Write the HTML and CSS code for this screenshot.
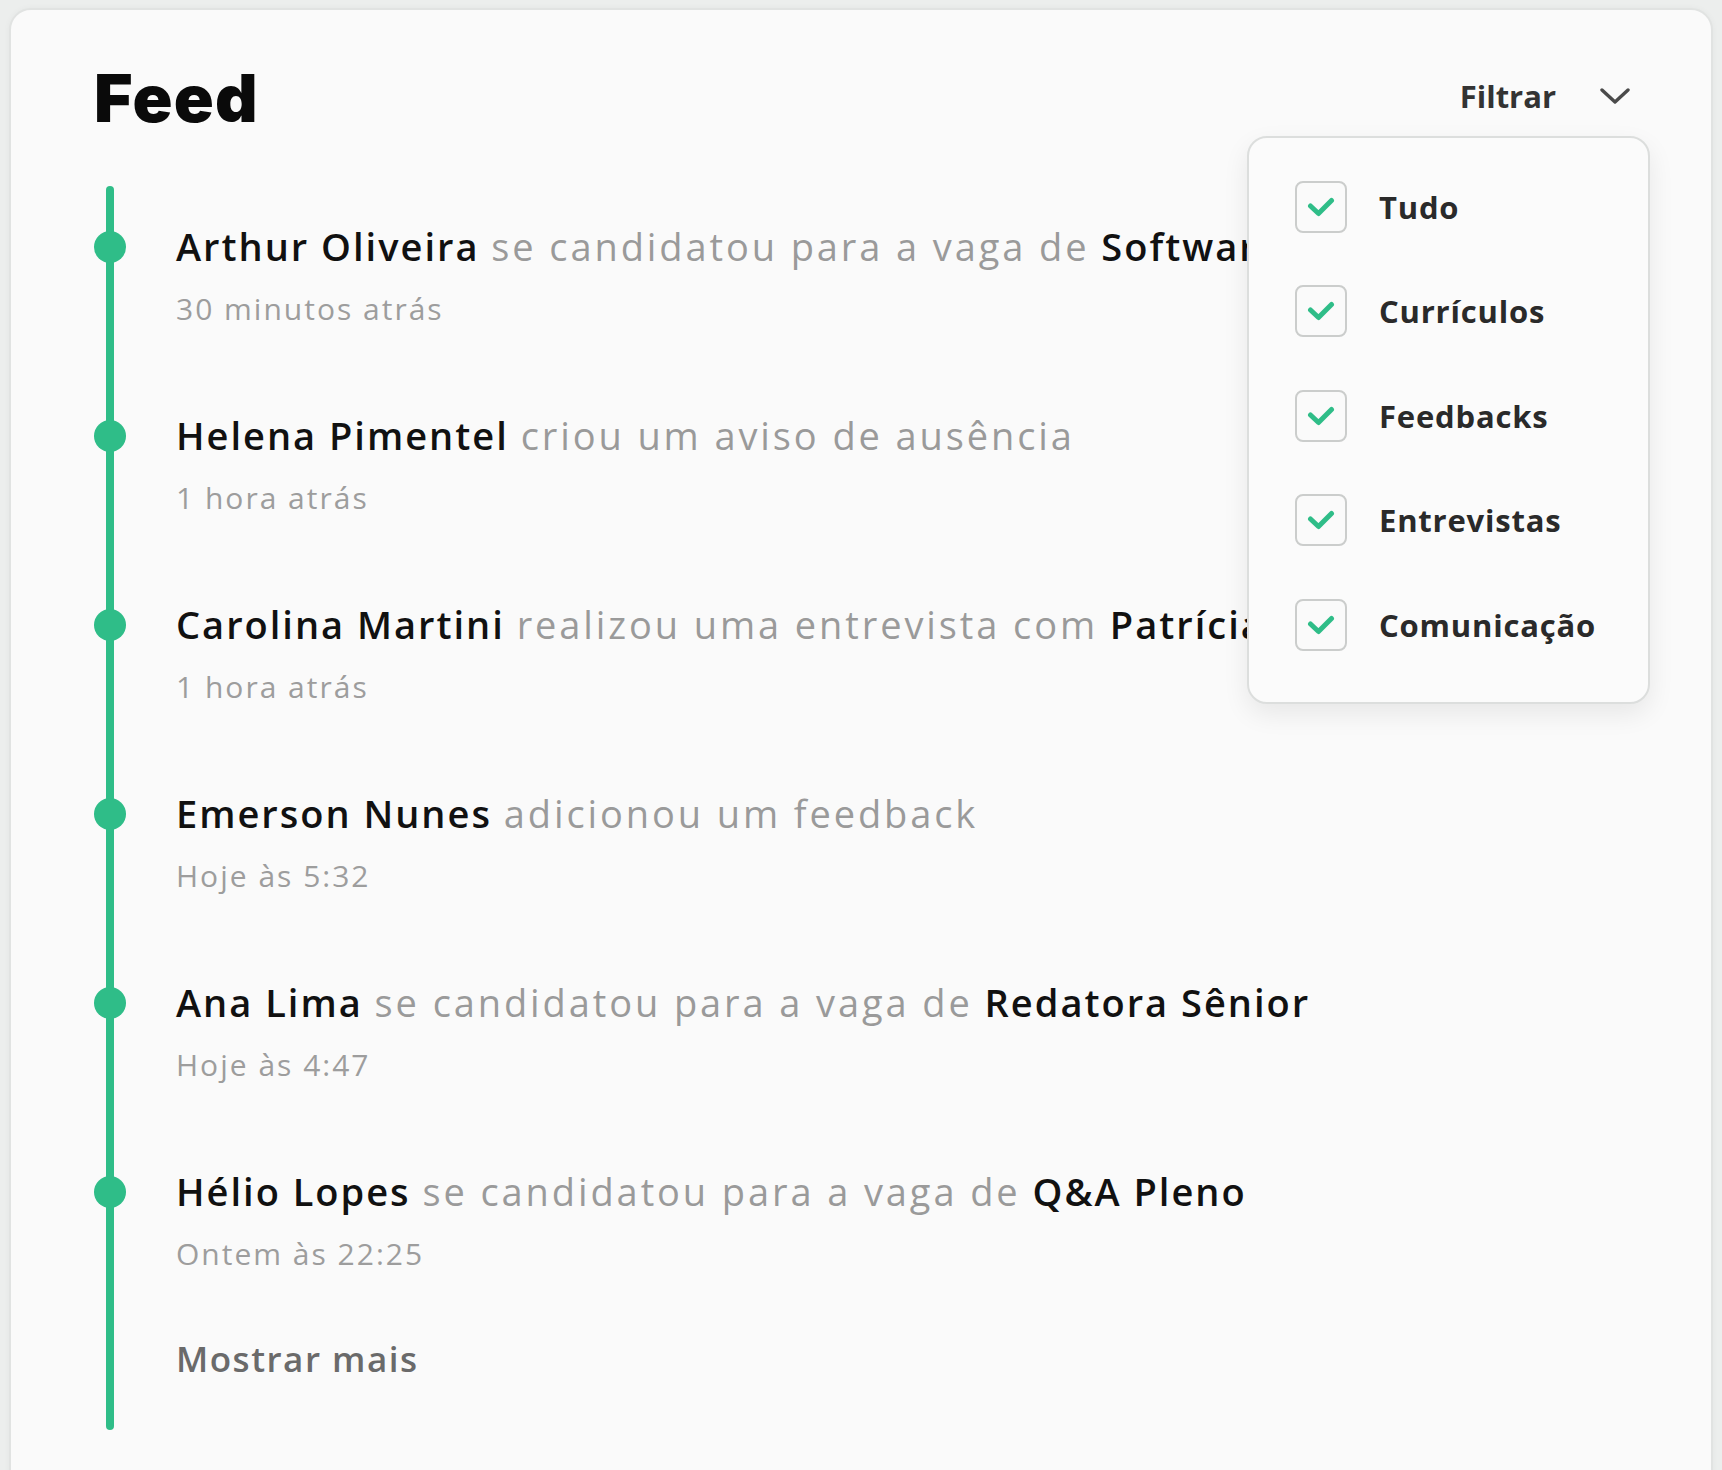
FILE: index.html
```html
<!DOCTYPE html>
<html lang="pt-BR">
<head>
<meta charset="utf-8">
<title>Feed</title>
<link rel="stylesheet" href="styles.css">
</head>
<body>
<div class="card">
  <header class="head">
    <h1 class="title">Feed</h1>
    <div class="filter">
      <button class="filter-btn" type="button">
        <span>Filtrar</span>
        <svg class="chev" width="30" height="16" viewBox="0 0 30 16"><polyline points="2,2 15,14 28,2" fill="none" stroke="currentColor" stroke-width="3.4" stroke-linecap="round" stroke-linejoin="round"/></svg>
      </button>
      <div class="menu">
        <div class="opt"><span class="box"><svg width="28" height="20" viewBox="0 0 28 20"><polyline points="3.5,9 11.5,16.5 24.5,3.5" fill="none" stroke="currentColor" stroke-width="5" stroke-linecap="round" stroke-linejoin="round"/></svg></span><span class="opt-label">Tudo</span></div>
        <div class="opt"><span class="box"><svg width="28" height="20" viewBox="0 0 28 20"><polyline points="3.5,9 11.5,16.5 24.5,3.5" fill="none" stroke="currentColor" stroke-width="5" stroke-linecap="round" stroke-linejoin="round"/></svg></span><span class="opt-label">Currículos</span></div>
        <div class="opt"><span class="box"><svg width="28" height="20" viewBox="0 0 28 20"><polyline points="3.5,9 11.5,16.5 24.5,3.5" fill="none" stroke="currentColor" stroke-width="5" stroke-linecap="round" stroke-linejoin="round"/></svg></span><span class="opt-label">Feedbacks</span></div>
        <div class="opt"><span class="box"><svg width="28" height="20" viewBox="0 0 28 20"><polyline points="3.5,9 11.5,16.5 24.5,3.5" fill="none" stroke="currentColor" stroke-width="5" stroke-linecap="round" stroke-linejoin="round"/></svg></span><span class="opt-label">Entrevistas</span></div>
        <div class="opt"><span class="box"><svg width="28" height="20" viewBox="0 0 28 20"><polyline points="3.5,9 11.5,16.5 24.5,3.5" fill="none" stroke="currentColor" stroke-width="5" stroke-linecap="round" stroke-linejoin="round"/></svg></span><span class="opt-label">Comunicação</span></div>
      </div>
    </div>
  </header>

  <ul class="timeline">
    <li class="entry first">
      <div class="rail"><div class="seg"><span class="dot"></span></div></div>
      <div class="body">
        <p class="line"><span class="who">Arthur Oliveira</span> <span class="muted">se candidatou para a vaga de</span> <span class="who">Software</span></p>
        <p class="time">30 minutos atrás</p>
      </div>
    </li>
    <li class="entry">
      <div class="rail"><div class="seg"><span class="dot"></span></div></div>
      <div class="body">
        <p class="line"><span class="who">Helena Pimentel</span> <span class="muted">criou um aviso de ausência</span></p>
        <p class="time">1 hora atrás</p>
      </div>
    </li>
    <li class="entry">
      <div class="rail"><div class="seg"><span class="dot"></span></div></div>
      <div class="body">
        <p class="line"><span class="who">Carolina Martini</span> <span class="muted">realizou uma entrevista com</span> <span class="who">Patrícia Souza</span></p>
        <p class="time">1 hora atrás</p>
      </div>
    </li>
    <li class="entry">
      <div class="rail"><div class="seg"><span class="dot"></span></div></div>
      <div class="body">
        <p class="line"><span class="who">Emerson Nunes</span> <span class="muted">adicionou um feedback</span></p>
        <p class="time">Hoje às 5:32</p>
      </div>
    </li>
    <li class="entry">
      <div class="rail"><div class="seg"><span class="dot"></span></div></div>
      <div class="body">
        <p class="line"><span class="who">Ana Lima</span> <span class="muted">se candidatou para a vaga de</span> <span class="who">Redatora Sênior</span></p>
        <p class="time">Hoje às 4:47</p>
      </div>
    </li>
    <li class="entry">
      <div class="rail"><div class="seg"><span class="dot"></span></div></div>
      <div class="body">
        <p class="line"><span class="who">Hélio Lopes</span> <span class="muted">se candidatou para a vaga de</span> <span class="who">Q&amp;A Pleno</span></p>
        <p class="time">Ontem às 22:25</p>
      </div>
    </li>
    <li class="entry last">
      <div class="rail"><div class="seg"></div></div>
      <div class="body more-body">
        <a class="more" href="#">Mostrar mais</a>
      </div>
    </li>
  </ul>
</div>
</body>
</html>
```

FILE: styles.css
```css
html, body {
  margin: 0;
  padding: 0;
  height: 100%;
  overflow: hidden;
}

body {
  background: #eceeed;
  font-family: "Open Sans", "Noto Sans", sans-serif;
  color: #111;
}

.card {
  margin: 8px 9px 0 9px;
  height: 1500px;
  box-sizing: border-box;
  background: #fafafa;
  border: 2px solid #e1e3e2;
  border-radius: 22px;
  box-shadow: 0 0 6px rgba(0, 0, 0, 0.04);
  padding: 48px 81px 0 83px;
}

/* header */
.head {
  display: flex;
  justify-content: space-between;
  align-items: stretch;
  height: 80px;
}

.title {
  margin: 0;
  font-family: "Inter", "Roboto", sans-serif;
  font-weight: 900;
  font-size: 66px;
  line-height: 80px;
  color: #0a0a0a;
  letter-spacing: 1.2px;
}

.filter {
  position: relative;
}

.filter-btn {
  display: flex;
  align-items: center;
  gap: 44px;
  height: 100%;
  padding: 0 0 4px 0;
  margin: 0;
  border: 0;
  background: none;
  font-family: inherit;
  font-weight: 700;
  font-size: 31px;
  line-height: 40px;
  color: #333;
  cursor: pointer;
}

.chev {
  color: #4a4a4a;
  display: block;
}

/* dropdown menu */
.menu {
  position: absolute;
  top: calc(100% - 2px);
  right: -20px;
  width: 403px;
  height: 568px;
  box-sizing: border-box;
  background: #fbfbfb;
  border: 2px solid #dcdedd;
  border-radius: 20px;
  box-shadow: 0 10px 26px rgba(0, 0, 0, 0.08);
  padding: 43px 0 0 46px;
  display: flex;
  flex-direction: column;
  gap: 52.4px;
  z-index: 5;
}

.opt {
  display: flex;
  align-items: center;
  gap: 32px;
  height: 52px;
}

.box {
  width: 52px;
  height: 52px;
  box-sizing: border-box;
  border: 2.5px solid #cbcdcc;
  border-radius: 8px;
  background: #fafafa;
  display: flex;
  align-items: center;
  justify-content: center;
  color: #2fbd88;
  flex: none;
}

.box svg {
  display: block;
}

.opt-label {
  font-weight: 700;
  font-size: 31px;
  color: #2a2a2a;
  letter-spacing: 0.8px;
}

/* timeline */
.timeline {
  list-style: none;
  margin: 48px 0 0 0;
  padding: 0;
}

.entry {
  display: grid;
  grid-template-columns: 32px 1fr;
  column-gap: 50px;
}

.rail {
  display: flex;
  justify-content: center;
}

.seg {
  width: 8px;
  background: #2fbd88;
  display: flex;
  flex-direction: column;
  align-items: center;
  padding-top: 45px;
  box-sizing: border-box;
}

.first .seg {
  border-radius: 4px 4px 0 0;
}

.last .seg {
  border-radius: 0 0 4px 4px;
}

.dot {
  flex: none;
  width: 32px;
  height: 32px;
  border-radius: 50%;
  background: #2fbd88;
}

.body {
  padding: 38px 0 48px 0;
  min-width: 0;
}

.line {
  margin: 0;
  white-space: nowrap;
  font-size: 38px;
  line-height: 44px;
  letter-spacing: 2px;
}

.who {
  font-weight: 600;
  color: #111;
  letter-spacing: 2px;
}

.muted {
  font-weight: 400;
  color: #9a9a9a;
  letter-spacing: 2.9px;
}

.time {
  margin: 23px 0 0 0;
  font-size: 30px;
  line-height: 36px;
  color: #9d9d9d;
  letter-spacing: 2px;
}

.more-body {
  padding: 17px 0 49px 0;
}

.more {
  display: block;
  font-size: 35px;
  line-height: 44px;
  font-weight: 600;
  color: #6a6a6a;
  text-decoration: none;
  letter-spacing: 1.5px;
}
```
